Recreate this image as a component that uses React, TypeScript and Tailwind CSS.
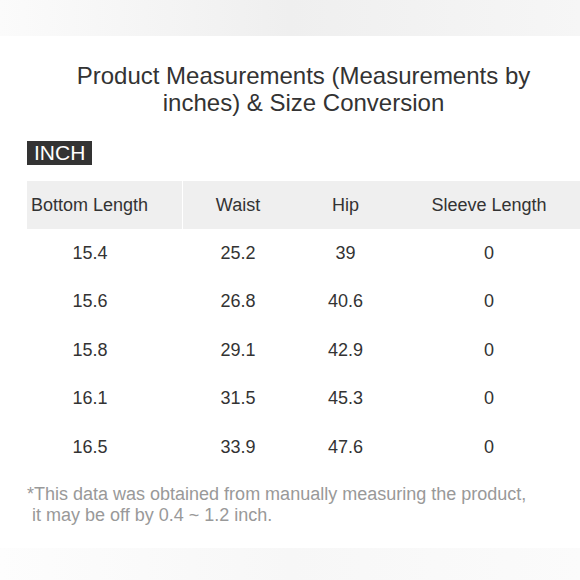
const headers = ["Bottom Length", "Waist", "Hip", "Sleeve Length"];

const rows = [
  ["15.4", "25.2", "39", "0"],
  ["15.6", "26.8", "40.6", "0"],
  ["15.8", "29.1", "42.9", "0"],
  ["16.1", "31.5", "45.3", "0"],
  ["16.5", "33.9", "47.6", "0"],
];

// column widths follow the picture: first column is wider, last fills the rest
const cols = "grid grid-cols-[156px_110px_105px_1fr]";

const App = () => {
  return (
    <div className="w-[580px] h-[580px] bg-white flex flex-col overflow-hidden font-['Liberation_Sans',Arial,sans-serif] text-[#333]">
      <div className="h-[36px] shrink-0 bg-gradient-to-r from-[#fbfbfb] via-[#efefef] to-[#f6f6f6]" />

      <div className="flex-1 pl-[27px]">
        <h1 className="mt-[26px] text-center text-[24px] leading-[27px] font-normal">
          Product Measurements (Measurements by
          <br />
          inches) &amp; Size Conversion
        </h1>

        <div className="mt-[25px] inline-block bg-[#333] text-white text-[21px] leading-[24px] px-[7px]">
          INCH
        </div>

        <div className="mt-[14px] text-[18px]">
          <div className={`${cols} h-[48px] bg-[#efefef] items-center`}>
            <div className="h-full flex items-center pl-[4px] border-r border-white">
              {headers[0]}
            </div>
            <div className="text-center">{headers[1]}</div>
            <div className="text-center">{headers[2]}</div>
            <div className="text-center">{headers[3]}</div>
          </div>

          {rows.map((row) => (
            <div key={row[0]} className={`${cols} h-[48.5px] items-center`}>
              <div className="w-[126px] text-center">{row[0]}</div>
              <div className="text-center">{row[1]}</div>
              <div className="text-center">{row[2]}</div>
              <div className="text-center">{row[3]}</div>
            </div>
          ))}
        </div>

        <p className="mt-[12px] text-[18px] leading-[21px] text-[#999]">
          *This data was obtained from manually measuring the product,
          <br />
          &nbsp;it may be off by 0.4 ~ 1.2 inch.
        </p>
      </div>

      <div className="h-[32px] shrink-0 bg-gradient-to-r from-[#fdfdfd] via-[#f7f7f7] to-[#fbfbfb]" />
    </div>
  );
};

export default App;
